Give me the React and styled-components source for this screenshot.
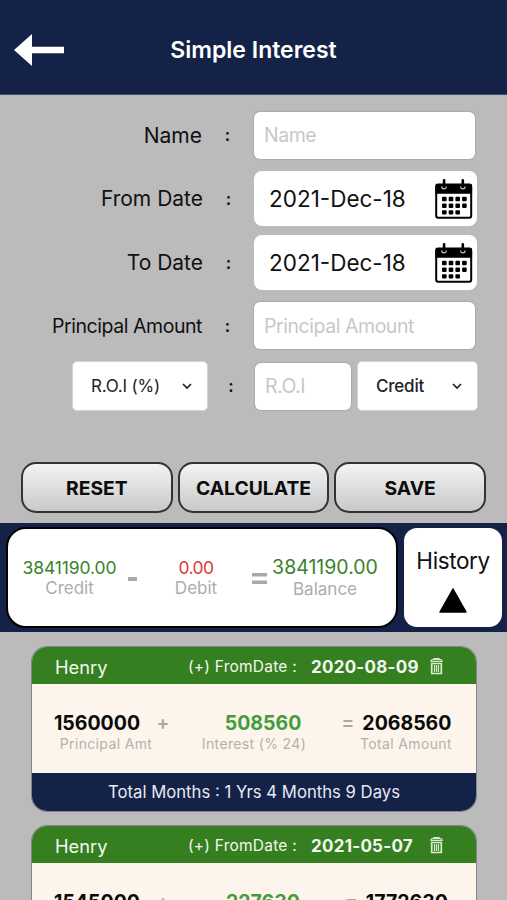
import React, { useState } from "react";
import styled, { createGlobalStyle } from "styled-components";

const GlobalStyle = createGlobalStyle`
* {
  box-sizing: border-box;
}
body {
  margin: 0;
  background: #bbbbbb;
  font-family: Inter, "Liberation Sans", sans-serif;
  color: #111;
}
`;

const Page = styled.div`
width: 507px;
height: 900px;
overflow: hidden;
background: #bbbbbb;
`;

const Header = styled.header`
display: grid;
grid-template-columns: 64px 1fr 64px;
align-items: center;
height: 95px;
padding-top: 5px;
background: #152248;
border-bottom: 1px solid #43506f;
`;

const BackButton = styled.button`
display: flex;
border: none;
padding: 0 0 0 14px;
background: none;
cursor: pointer;
`;

const Title = styled.h1`
margin: 0;
text-align: center;
font-size: 23px;
font-weight: 600;
color: white;
`;

const Form = styled.form`
height: 367px;
padding-top: 16px;
`;

const Row = styled.div`
display: flex;
align-items: center;
height: ${props => props.$height}px;
margin-bottom: ${props => props.$gap}px;
`;

const Label = styled.label`
width: 203px;
padding-right: ${props => props.$inset || 0}px;
text-align: right;
white-space: nowrap;
font-size: ${props => props.$size || 21}px;
letter-spacing: ${props => props.$spacing || 0}px;
`;

const Colon = styled.span`
width: ${props => props.$width || 51}px;
padding-right: ${props => props.$inset || 0}px;
text-align: center;
font-size: 17px;
font-weight: 600;
`;

const Input = styled.input`
width: ${props => props.$width}px;
height: 47px;
padding: 0 10px;
border: none;
border-radius: 6px;
outline: none;
background: white;
box-shadow: 0 0 1px 1px #aaaaaa;
font-family: inherit;
font-size: 19.5px;
letter-spacing: -0.45px;
&::placeholder {
  color: #c8c8c8;
  opacity: 1;
}
`;

const DateField = styled.div`
display: flex;
align-items: center;
justify-content: space-between;
width: 223px;
height: 55px;
padding: 0 4px 0 15px;
border-radius: 8px;
background: white;
font-size: 22.5px;
`;

const Select = styled.button`
display: flex;
align-items: center;
justify-content: space-between;
width: ${props => props.$width}px;
height: 50px;
margin-left: ${props => props.$left}px;
padding: 0 15px 0 18px;
border: 1px solid #d2d2d2;
border-radius: 5px;
background: white;
color: #222;
font-family: inherit;
font-size: 17px;
font-weight: ${props => props.$weight || 400};
letter-spacing: -0.2px;
`;

const Actions = styled.div`
display: flex;
gap: 5px;
height: 61px;
padding: 0 21px;
`;

const Button = styled.button`
flex: 1;
height: 51px;
padding: 1px 0 0;
border: 2px solid #333;
border-radius: 15px;
background: linear-gradient(#f3f3f3, #c9c9c9);
color: #0c0c0c;
font-family: inherit;
font-size: 19.3px;
font-weight: 700;
cursor: pointer;
`;

const SummaryBar = styled.section`
display: flex;
gap: 6px;
height: 109px;
padding: 4px 5px 4px 6px;
background: #152248;
`;

const Totals = styled.div`
display: grid;
grid-template-columns: 111px 15px 112px 15px 116px;
align-items: center;
width: 392px;
height: 101px;
padding-left: 6px;
border: 2px solid black;
border-radius: 20px;
background: white;
`;

const Total = styled.div`
display: flex;
flex-direction: column;
align-items: center;
line-height: ${props => props.$line || 21}px;
font-size: ${props => props.$size || 17.5}px;
letter-spacing: ${props => props.$spacing || 0}px;
color: ${props => props.$color};
`;

const Caption = styled.span`
font-size: 17px;
letter-spacing: 0;
color: #adadad;
`;

const Sign = styled.span`
display: flex;
justify-content: center;
padding-top: 2px;
`;

const History = styled.button`
display: flex;
flex-direction: column;
align-items: center;
width: 98px;
height: 99px;
margin-top: 1px;
padding: 18px 0 0;
gap: 13px;
border: none;
border-radius: 13px;
background: white;
color: #111;
font-family: inherit;
font-size: 22.5px;
letter-spacing: -0.4px;
line-height: 29px;
`;

const List = styled.main`
padding: 15px 31px 0 32px;
`;

const Card = styled.article`
overflow: hidden;
height: 164px;
margin-bottom: 15px;
border-radius: 15px;
background: #fdf5ec;
box-shadow: 0 0 0 1px #85848f;
`;

const CardHeader = styled.div`
display: flex;
align-items: center;
height: 37px;
padding: 2px 0 0 23px;
background: #367f20;
color: #f2f8ef;
`;

const Person = styled.span`
width: 133px;
font-size: 18.3px;
`;

const FromDate = styled.span`
width: 123px;
font-size: 15.5px;
letter-spacing: 0.22px;
`;

const CardDate = styled.strong`
width: 119px;
font-size: 17px;
font-weight: 700;
white-space: nowrap;
letter-spacing: 0.25px;
`;

const CardBody = styled.div`
display: flex;
height: 89px;
padding: 28px 0 0 20px;
`;

const Amount = styled.div`
display: flex;
flex-direction: column;
align-items: center;
width: ${props => props.$width}px;
white-space: nowrap;
`;

const Figure = styled.span`
display: flex;
gap: 8px;
padding-left: ${props => props.$shift || 0}px;
line-height: 22px;
font-size: 19.5px;
font-weight: 700;
color: ${props => props.$color || "#0a0a0a"};
`;

const AmountCaption = styled.span`
padding-left: ${props => props.$shift || 0}px;
font-size: 14px;
line-height: 20px;
letter-spacing: 0.35px;
color: #b5b0ab;
`;

const CardSign = styled.span`
line-height: 22px;
text-align: center;
font-size: 19px;
font-weight: 600;
color: #aba7a3;
`;

const CardFooter = styled.div`
display: flex;
align-items: center;
justify-content: center;
height: 38px;
background: #152248;
color: #e6eaf2;
font-size: 16.7px;
`;

function BackArrow() {
  return (
    <svg width="50" height="32" viewBox="0 0 50 32" fill="white">
      <path d="M0 16 18 0v12.8h32v6.4H18V32Z" />
    </svg>
  );
}

function CalendarIcon() {
  return (
    <svg width="38" height="40" viewBox="0 0 38 40">
      <rect x="1.2" y="6" width="35" height="32.8" rx="2" fill="white" stroke="black" strokeWidth="2" />
      <path d="M.4 14.8V7Q.4 4.6 3 4.6h31.5q2.6 0 2.6 2.4v7.8Z" />
      <path d="M6.8 7.5a2.3 2.3 0 1 0 4.6 0M25.5 7.5a2.3 2.3 0 1 0 4.6 0" fill="none" stroke="#c8c8c8" strokeWidth="1.2" />
      <path d="M9.1 1.3v6M27.8 1.3v6" stroke="black" strokeWidth="2.6" strokeLinecap="round" />
      {[17.8, 24.5, 31.2].map((y, row) =>
        [7, 13.7, 20.4, 27.1].slice(0, row === 2 ? 3 : 4).map(x => (
          <rect key={x + "-" + y} x={x} y={y} width="4.6" height="4.4" rx="1" />
        ))
      )}
    </svg>
  );
}

function Chevron() {
  return (
    <svg width="10" height="7" viewBox="0 0 10 7" fill="none" stroke="#222" strokeWidth="1.7">
      <path d="m1 1 4 4 4-4" />
    </svg>
  );
}

function TrashIcon() {
  return (
    <svg width="13" height="17" viewBox="0 0 13 17" fill="none" stroke="#d8ecd0">
      <path d="M.3 3.5h12.4M.8 3q.4-1.3 2-1.3h7.4q1.6 0 2 1.3M4 1.5V.6h5v.9" strokeWidth="1.2" />
      <path d="M1.7 5.5h9.6v10H1.7Z" strokeWidth="1.7" />
      <path d="M4.5 7v7M6.5 7v7M8.5 7v7" strokeWidth="1.2" />
    </svg>
  );
}

const records = [
  {
    name: "Henry",
    date: "2020-08-09",
    principal: "1560000",
    interest: "508560",
    total: "2068560",
    period: "1 Yrs 4 Months 9 Days",
  },
  {
    name: "Henry",
    date: "2021-05-07",
    principal: "1545000",
    interest: "227630",
    total: "1772630",
    period: "0 Yrs 7 Months 11 Days",
  },
];

function Record({ record }) {
  return (
    <Card>
      <CardHeader>
        <Person>{record.name}</Person>
        <FromDate>(+) FromDate :</FromDate>
        <CardDate>{record.date}</CardDate>
        <TrashIcon />
      </CardHeader>
      <CardBody>
        <Amount $width={90}>
          <Figure>{record.principal}</Figure>
          <AmountCaption $shift={18}>Principal Amt</AmountCaption>
        </Amount>
        <Amount $width={42}>
          <CardSign>+</CardSign>
        </Amount>
        <Amount $width={140}>
          <Figure $color="#449c3f" $shift={18}>{record.interest}</Figure>
          <AmountCaption>Interest (% 24)</AmountCaption>
        </Amount>
        <Amount $width={145}>
          <Figure><CardSign>=</CardSign>{record.total}</Figure>
          <AmountCaption $shift={19}>Total Amount</AmountCaption>
        </Amount>
      </CardBody>
      <CardFooter>Total Months : {record.period}</CardFooter>
    </Card>
  );
}

function App() {
  const [name, setName] = useState("");
  const [principal, setPrincipal] = useState("");
  const [rate, setRate] = useState("");

  return (
    <Page>
      <GlobalStyle />
      <Header>
        <BackButton><BackArrow /></BackButton>
        <Title>Simple Interest</Title>
      </Header>
      <Form>
        <Row $height={48} $gap={12}>
          <Label $inset={1}>Name</Label>
          <Colon $inset={2}>:</Colon>
          <Input $width={221} value={name} onChange={e => setName(e.target.value)} placeholder="Name" />
        </Row>
        <Row $height={55} $gap={9}>
          <Label>From Date</Label>
          <Colon>:</Colon>
          <DateField>2021-Dec-18<CalendarIcon /></DateField>
        </Row>
        <Row $height={55} $gap={12}>
          <Label>To Date</Label>
          <Colon>:</Colon>
          <DateField>2021-Dec-18<CalendarIcon /></DateField>
        </Row>
        <Row $height={47} $gap={12}>
          <Label $size={19.5} $spacing={-0.45} $inset={1}>Principal Amount</Label>
          <Colon $inset={2}>:</Colon>
          <Input $width={221} value={principal} onChange={e => setPrincipal(e.target.value)} placeholder="Principal Amount" />
        </Row>
        <Row $height={50} $gap={0}>
          <Select type="button" $width={136} $left={72}>R.O.I (%)<Chevron /></Select>
          <Colon $width={47} $inset={1}>:</Colon>
          <Input $width={96} value={rate} onChange={e => setRate(e.target.value)} placeholder="R.O.I" />
          <Select type="button" $width={121} $left={6} $weight={500}>Credit<Chevron /></Select>
        </Row>
      </Form>
      <Actions>
        <Button>RESET</Button>
        <Button>CALCULATE</Button>
        <Button>SAVE</Button>
      </Actions>
      <SummaryBar>
        <Totals>
          <Total $color="#39832c" $spacing={-0.1}>3841190.00<Caption>Credit</Caption></Total>
          <Sign>
            <svg width="9" height="4"><rect width="9" height="4" fill="#a9a9a9" /></svg>
          </Sign>
          <Total $color="#db3a30" $spacing={-0.6}>0.00<Caption>Debit</Caption></Total>
          <Sign>
            <svg width="15" height="11" fill="#a9a9a9"><rect width="15" height="3.5" /><rect y="7.5" width="15" height="3.5" /></svg>
          </Sign>
          <Total $color="#39832c" $size={19.5} $line={22}>3841190.00<Caption>Balance</Caption></Total>
        </Totals>
        <History>
          History
          <svg width="28" height="25" viewBox="0 0 28 25"><path d="M14 1 27 24H1Z" stroke="black" strokeWidth="1.5" strokeLinejoin="round" /></svg>
        </History>
      </SummaryBar>
      <List>
        {records.map(record => <Record key={record.date} record={record} />)}
      </List>
    </Page>
  );
}

export default App;
